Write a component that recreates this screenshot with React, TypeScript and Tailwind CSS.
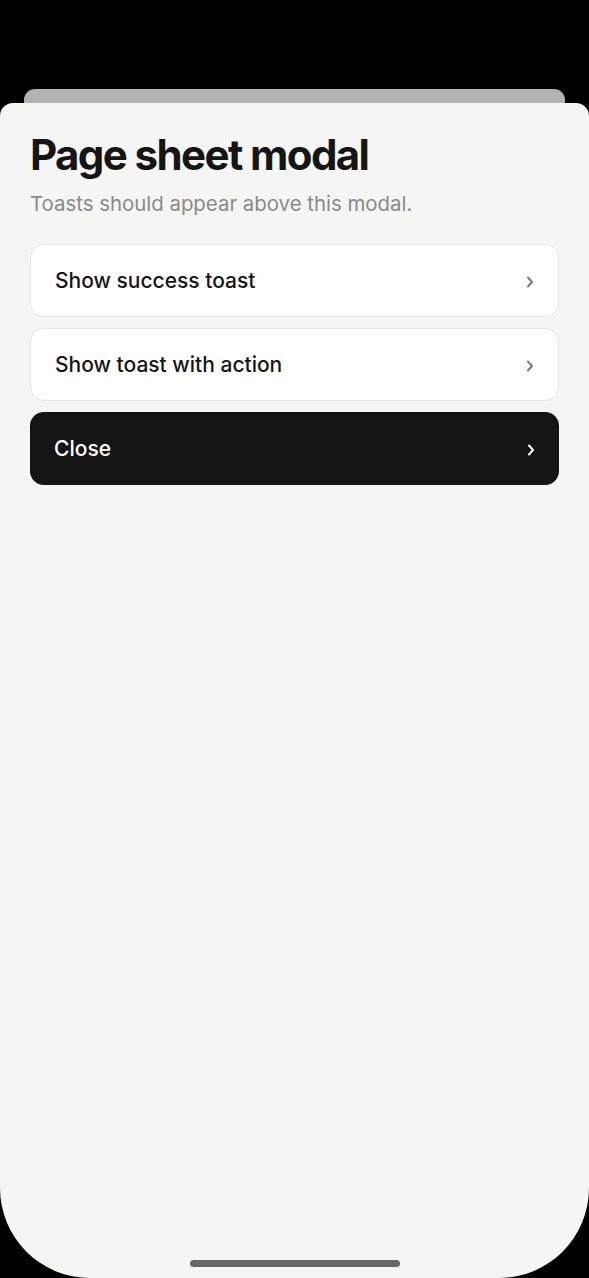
import React from 'react';

const Chevron = ({ dark }: { dark?: boolean }) => (
  <svg width="8" height="12" viewBox="0 0 8 12" fill="none" className="mt-[2px] shrink-0">
    <path
      d="M2 1.5L6 6L2 10.5"
      stroke={dark ? '#ffffff' : '#7a7a7a'}
      strokeWidth="2"
      strokeLinecap="round"
      strokeLinejoin="round"
    />
  </svg>
);

const Row = ({ label, dark }: { label: string; dark?: boolean }) => (
  <button
    className={
      dark
        ? 'flex h-[73px] w-full items-center justify-between rounded-[14px] bg-[#151515] pl-6 pr-6 text-left'
        : 'flex h-[73px] w-full items-center justify-between rounded-[14px] border border-[#e6e6e4] bg-white pl-6 pr-6 text-left'
    }
  >
    <span className={dark ? 'text-[21px] font-medium text-white' : 'text-[21px] font-medium text-[#151515]'}>
      {label}
    </span>
    <Chevron dark={dark} />
  </button>
);

export default function App() {
  return (
    <div className="flex h-[1278px] w-[589px] flex-col bg-black" style={{ fontFamily: 'Inter, "Noto Sans", sans-serif' }}>
      <div className="h-[89px] shrink-0" />
      <div className="mx-[24px] h-[16px] shrink-0 rounded-t-[11px] bg-[#b3b3b3]" />
      <div className="-mt-[2px] flex flex-1 flex-col rounded-t-[13px] rounded-b-[90px] bg-[#f5f5f3] px-[30px]">
        <h1 className="mt-[26px] text-[42px] font-bold leading-[52px] tracking-[-1.6px] text-[#151515]">Page sheet modal</h1>
        <p className="mt-[10px] text-[20.4px] leading-[26px] text-[#8a8a8a]">Toasts should appear above this modal.</p>
        <div className="mt-[27px] flex flex-col gap-[11px]">
          <Row label="Show success toast" />
          <Row label="Show toast with action" />
          <Row label="Close" dark />
        </div>
        <div className="mt-auto mb-[11px] flex justify-center">
          <div className="h-[7px] w-[210px] rounded-full bg-[#686868]" />
        </div>
      </div>
    </div>
  );
}
